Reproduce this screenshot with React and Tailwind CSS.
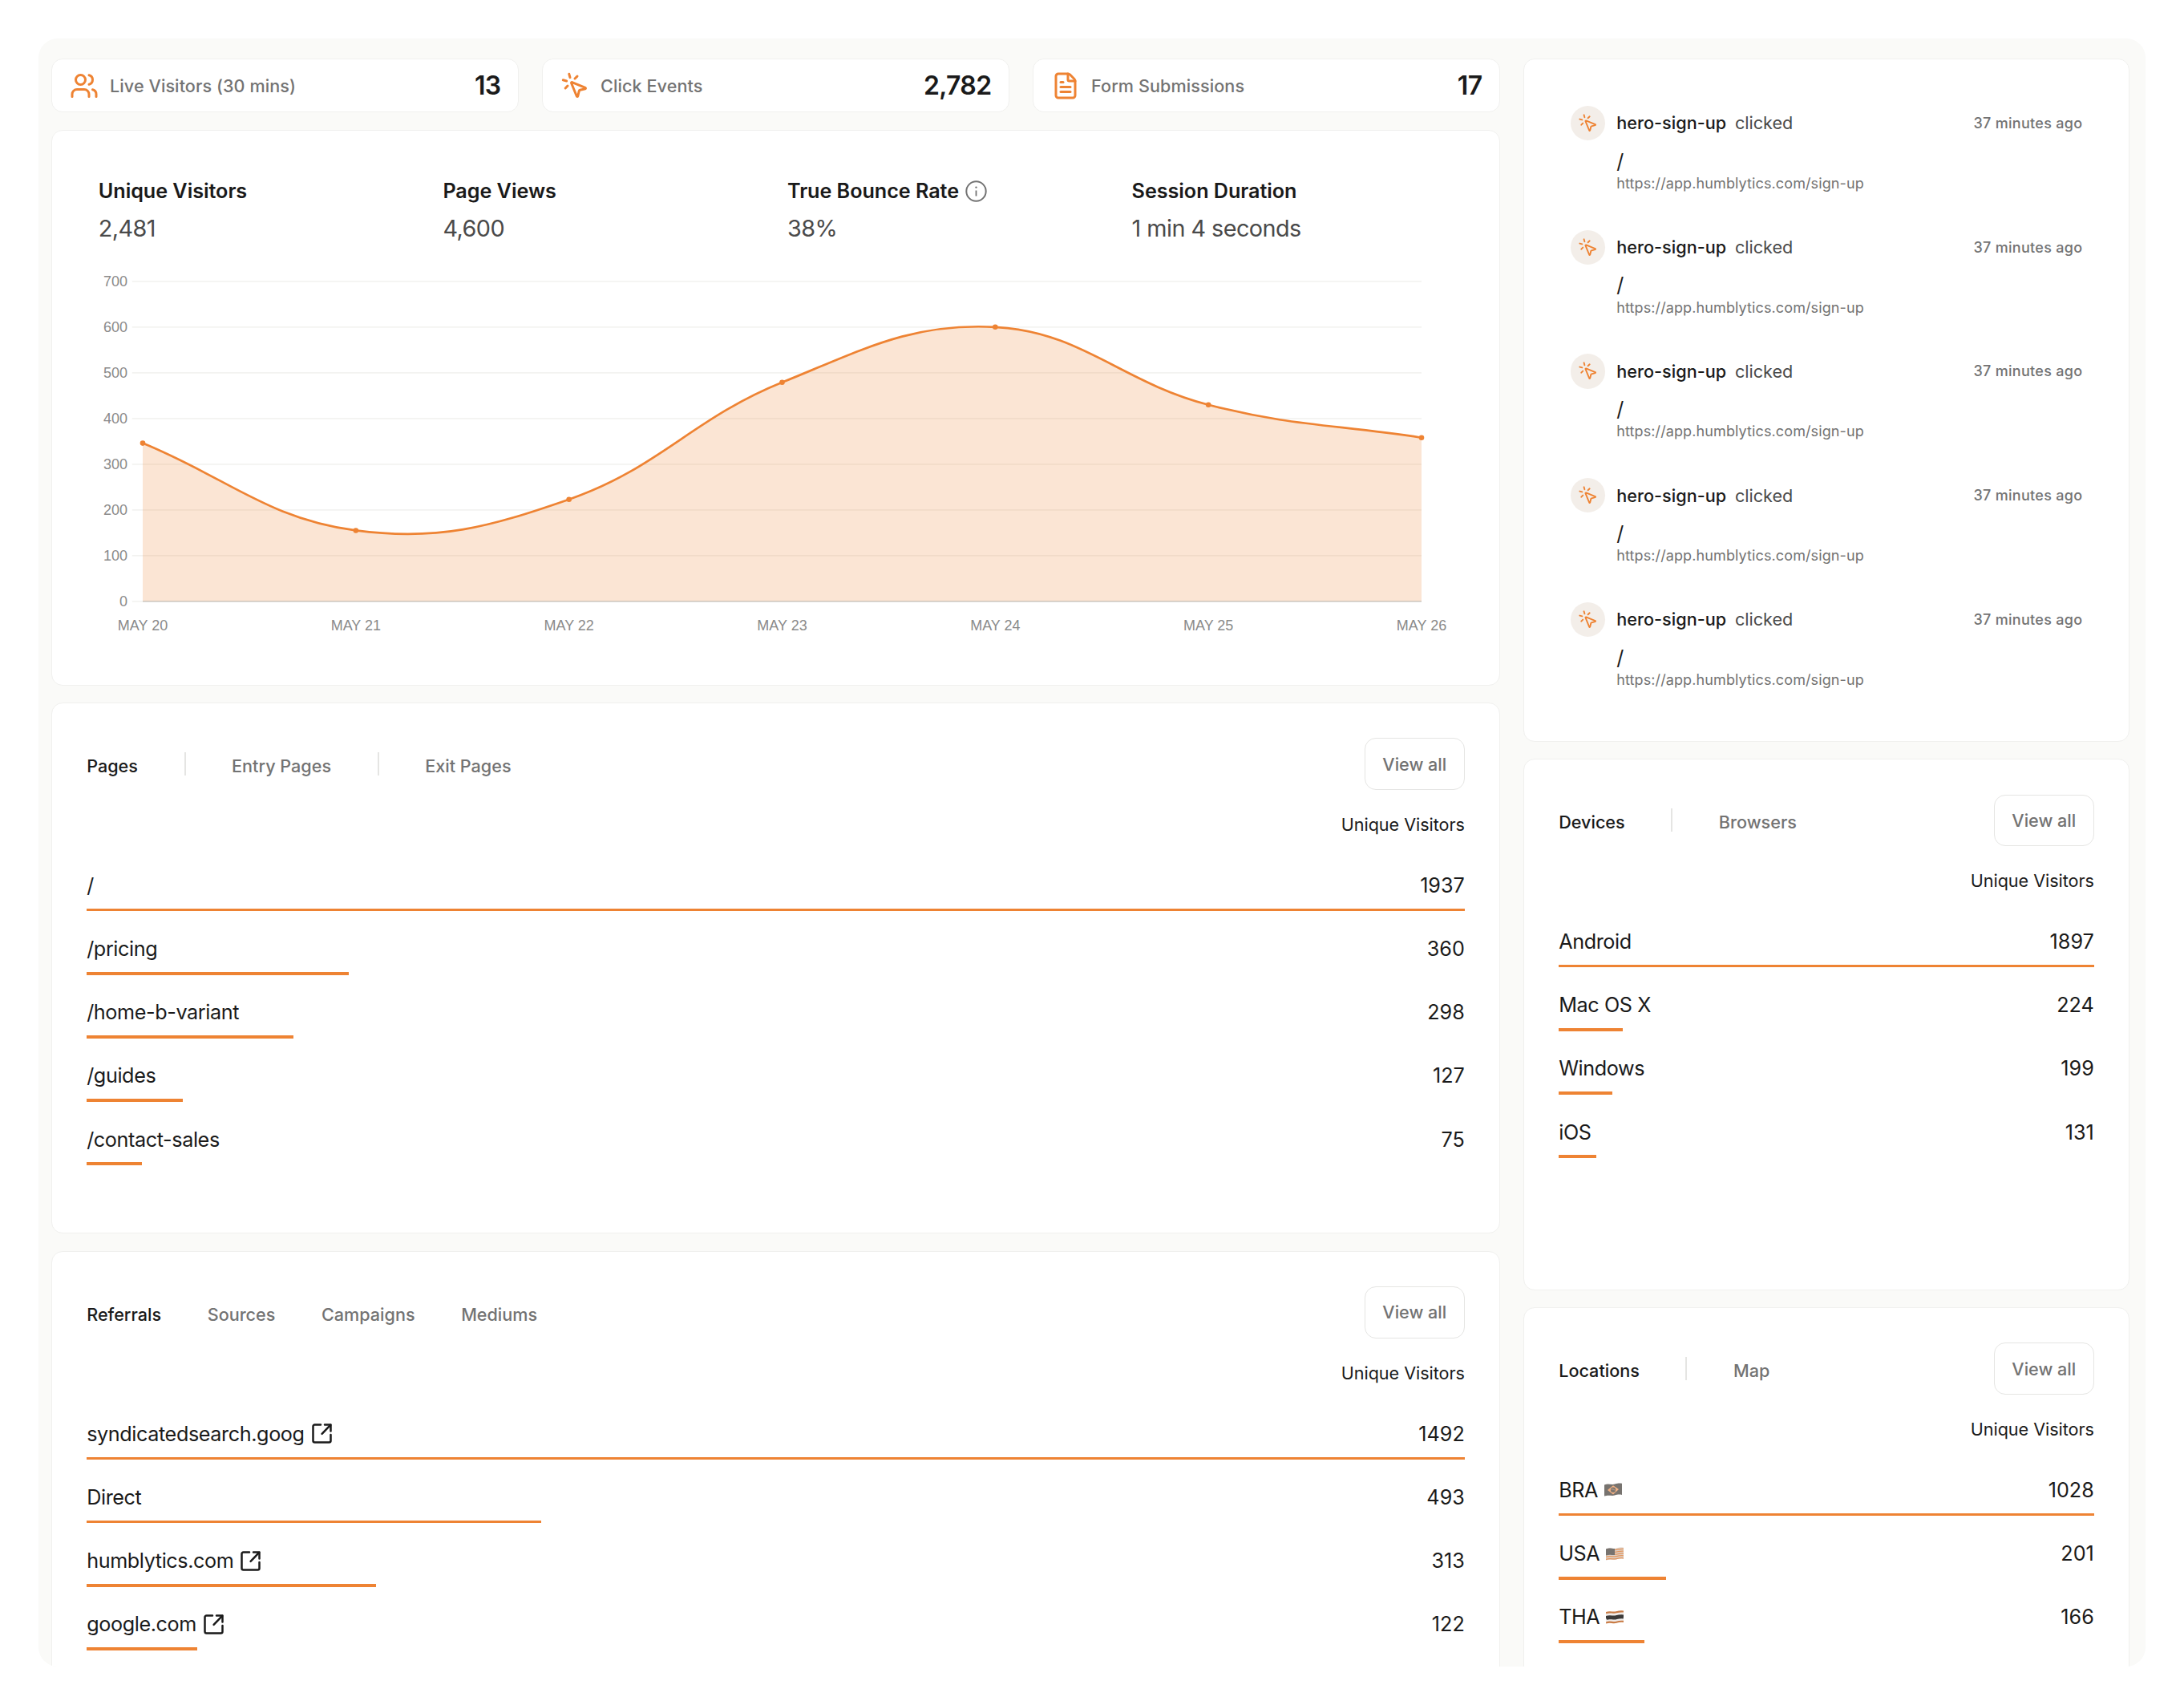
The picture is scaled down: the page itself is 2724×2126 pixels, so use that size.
import React from "react";
import { FileText, MousePointerClick, Users } from "lucide-react";

const ORANGE = "#ee8333";

const stats = [
  { label: "Live Visitors (30 mins)", value: "13", icon: Users },
  { label: "Click Events", value: "2,782", icon: MousePointerClick },
  { label: "Form Submissions", value: "17", icon: FileText },
];

const metrics = [
  { label: "Unique Visitors", value: "2,481" },
  { label: "Page Views", value: "4,600" },
  { label: "True Bounce Rate", value: "38%", info: true },
  { label: "Session Duration", value: "1 min 4 seconds" },
];

const visitors = [
  { date: "MAY 20", count: 346 },
  { date: "MAY 21", count: 155 },
  { date: "MAY 22", count: 223 },
  { date: "MAY 23", count: 479 },
  { date: "MAY 24", count: 600 },
  { date: "MAY 25", count: 430 },
  { date: "MAY 26", count: 358 },
];

const pages = [
  { name: "/", count: 1937 },
  { name: "/pricing", count: 360 },
  { name: "/home-b-variant", count: 298 },
  { name: "/guides", count: 127 },
  { name: "/contact-sales", count: 75 },
];

const referrals = [
  { name: "syndicatedsearch.goog", count: 1492, external: true },
  { name: "Direct", count: 493 },
  { name: "humblytics.com", count: 313, external: true },
  { name: "google.com", count: 122, external: true },
];

const devices = [
  { name: "Android", count: 1897 },
  { name: "Mac OS X", count: 224 },
  { name: "Windows", count: 199 },
  { name: "iOS", count: 131 },
];

const locations = [
  { name: "BRA", count: 1028, flag: "bra" },
  { name: "USA", count: 201, flag: "usa" },
  { name: "THA", count: 166, flag: "tha" },
];

const events = [1, 2, 3, 4, 5];

function InfoIcon() {
  return (
    <svg className="ml-2 size-[27px]" viewBox="0 0 27 27" fill="none" stroke="#737373" strokeWidth="2">
      <circle cx="13.5" cy="13.5" r="12.2" />
      <path d="M13.5 12.5v7" strokeWidth="1.8" />
      <circle cx="13.5" cy="8.6" r="1.2" fill="#737373" stroke="none" />
    </svg>
  );
}

function ExternalIcon() {
  return (
    <svg
      className="ml-[9px] size-[25px]"
      viewBox="0 0 25 25"
      fill="none"
      stroke="#1a1a1a"
      strokeWidth="2.5"
      strokeLinecap="round"
      strokeLinejoin="round"
    >
      <path d="M11 1.5H3.5a2 2 0 0 0-2 2v18a2 2 0 0 0 2 2h18a2 2 0 0 0 2-2V14" />
      <path d="M16 1.5h7.5V9.5" />
      <path d="M23.2 1.8 12.6 12.8" />
    </svg>
  );
}

function Flag({ code }) {
  return (
    <svg className="ml-2 h-[17px] w-[22px]" viewBox="0 0 22 17">
      {code === "bra" && (
        <>
          <path d="M0 2.5C5 .2 9 3 13 1.6 17 .4 19 .4 22 .8V15c-4-.8-6-.2-9 .6-4 1-8-1-13 1z" fill="#77736f" />
          <path d="M11 3.2 18 8l-7 6.4L4 9z" fill="#f3b183" />
          <circle cx="11" cy="8.8" r="3.2" fill="#7d756e" />
          <path d="M8.4 8c2-.5 4 .2 5 1.6" stroke="#d9b79c" strokeWidth=".7" fill="none" />
        </>
      )}
      {code === "usa" && (
        <>
          <path d="M0 2.5C5 .2 9 3 13 1.6 17 .4 19 .4 22 .8V15c-4-.8-6-.2-9 .6-4 1-8-1-13 1z" fill="#ddd0c6" />
          <path
            d="M11 3.6c4-.2 7-1.8 11-1.2M11 6.4c4-.2 7-1.8 11-1.2M11 9.2c4-.2 7-1.8 11-1.2M0 12.4c6-2 9 .4 13-.8 4-1 6-1.2 9-.8M0 15.4c6-2 9 .4 13-.8 4-1 6-1.2 9-.8"
            stroke="#e5965c"
            strokeWidth="1.3"
            fill="none"
          />
          <path d="M0 2.5c4-1.8 7-.4 11-.4v8C7 10 4 9.2 0 10.6z" fill="#77736f" />
        </>
      )}
      {code === "tha" && (
        <>
          <path d="M0 2.5C5 .2 9 3 13 1.6 17 .4 19 .4 22 .8V15c-4-.8-6-.2-9 .6-4 1-8-1-13 1z" fill="#f0ece9" />
          <path d="M0 3.2c5-2.3 9 .5 13-.9 4-1.2 6-1.2 9-.8" stroke="#c97c46" strokeWidth="2.2" fill="none" />
          <path d="M0 9.6c5-2.3 9 .5 13-.9 4-1.2 6-1.2 9-.8" stroke="#3b3a39" strokeWidth="5" fill="none" />
          <path d="M0 15.6c5-2.3 9 .5 13-.9 4-1.2 6-1.2 9-.8" stroke="#c97c46" strokeWidth="2.2" fill="none" />
        </>
      )}
    </svg>
  );
}

function StatCard({ label, value, icon: Icon }) {
  return (
    <div className="flex flex-1 items-center rounded-[14px] border border-[#f0f0ee] bg-white pr-[21.6px] pl-[22px]">
      <Icon className="size-9 text-[#ee8333]" strokeWidth={2} />
      <span className="ml-3.5 text-[21.6px] font-medium tracking-[0.08px] text-[#737373]">{label}</span>
      <span className="ml-auto text-[32px] font-semibold tracking-[-0.7px] text-[#1a1a1a]">{value}</span>
    </div>
  );
}

const LEFT = 100;
const RIGHT = 1695;
const TOP = 20.8;
const BOTTOM = 419.8;

function VisitorsChart() {
  const step = (RIGHT - LEFT) / (visitors.length - 1);
  const pts = visitors.map((d, i) => ({
    x: LEFT + i * step,
    y: BOTTOM - (d.count / 700) * (BOTTOM - TOP),
  }));

  // Control points on both sides of every value
  const controls = pts.map((p, i) => {
    const prev = pts[i - 1] || p;
    const next = pts[i + 1] || p;
    const d01 = Math.hypot(p.x - prev.x, p.y - prev.y);
    const d12 = Math.hypot(next.x - p.x, next.y - p.y);
    const a = (0.4 * d01) / (d01 + d12);
    const b = (0.4 * d12) / (d01 + d12);
    const dx = next.x - prev.x;
    const dy = next.y - prev.y;
    return { before: [p.x - a * dx, p.y - a * dy], after: [p.x + b * dx, p.y + b * dy] };
  });

  const line = pts
    .map((p, i) =>
      i === 0 ? `M${p.x} ${p.y}` : `C${controls[i - 1].after} ${controls[i].before} ${p.x} ${p.y}`
    )
    .join(" ");

  return (
    <svg className="block h-[480px] w-[1763px]" viewBox="0 0 1763 480">
      {[0, 100, 200, 300, 400, 500, 600, 700].map((v) => {
        const y = BOTTOM - (v / 700) * (BOTTOM - TOP);
        return (
          <g key={v}>
            <line x1="86.8" x2={RIGHT} y1={y} y2={y} stroke="#f3f3f1" strokeWidth="1.8" />
            <text x="81" y={y + 6.5} textAnchor="end" fontSize="18" fill="#8a8a8a" fontFamily="Liberation Sans, sans-serif">
              {v}
            </text>
          </g>
        );
      })}
      <path d={`${line} L${RIGHT} ${BOTTOM} L${LEFT} ${BOTTOM} Z`} fill={ORANGE} fillOpacity="0.21" />
      <line x1={LEFT} x2={RIGHT} y1={BOTTOM} y2={BOTTOM} stroke="#000" strokeOpacity="0.13" strokeWidth="1.8" />
      <path d={line} fill="none" stroke={ORANGE} strokeWidth="2.7" />
      {pts.map((p, i) => (
        <g key={visitors[i].date}>
          <circle cx={p.x} cy={p.y} r="3.3" fill={ORANGE} />
          <text x={p.x} y="456.3" textAnchor="middle" fontSize="18" fill="#8a8a8a" fontFamily="Liberation Sans, sans-serif">
            {visitors[i].date}
          </text>
        </g>
      ))}
    </svg>
  );
}

function ListCard({ tabs, divided, rows }) {
  const max = rows[0].count;

  return (
    <div className="h-[662.3px] shrink-0 rounded-[14px] border border-[#f0f0ee] bg-white p-[43.2px]">
      <div className="flex h-[64.8px] items-center">
        <div className="flex items-center gap-[57.6px]">
          {tabs.map((tab, i) => (
            <React.Fragment key={tab}>
              {divided && i > 0 && <div className="h-[29px] w-0.5 bg-[#e5e5e3]" />}
              <span
                className={`pt-[5px] text-[21.6px] font-medium ${i === 0 ? "text-[#1a1a1a]" : "text-[#737373]"}`}
              >
                {tab}
              </span>
            </React.Fragment>
          ))}
        </div>
        <button className="ml-auto h-full w-[125px] rounded-[14px] border border-[#e5e5e3] text-[21.6px] font-medium text-[#737373]">
          View all
        </button>
      </div>
      <p className="mt-[28.8px] text-right text-[21.6px] leading-[28.8px] tracking-[-0.05px] text-[#1a1a1a]">
        Unique Visitors
      </p>
      <div className="mt-[43.2px] flex flex-col gap-[28.8px]">
        {rows.map((row) => (
          <div key={row.name}>
            <div className="flex h-9 items-center text-[25.2px] leading-9 text-[#1a1a1a]">
              <span className="tracking-[-0.4px]">{row.name}</span>
              {row.external && <ExternalIcon />}
              {row.flag && <Flag code={row.flag} />}
              <span className="ml-auto">{row.count}</span>
            </div>
            <div
              className="mt-[10.8px] h-[3.6px] bg-[#ee8333]"
              style={{ width: `${Math.round((row.count / max) * 100)}%` }}
            />
          </div>
        ))}
      </div>
    </div>
  );
}

function EventItem() {
  return (
    <div className="h-[154.8px]">
      <div className="flex h-[43.2px] items-center">
        <div className="flex size-[43.2px] items-center justify-center rounded-full bg-[#f3eee9]">
          <MousePointerClick className="size-[25.2px] text-[#ee8333]" strokeWidth={1.8} />
        </div>
        <span className="ml-[14.4px] text-[21.6px] font-medium tracking-[0.05px] text-[#1a1a1a]">hero-sign-up</span>
        <span className="ml-[10.8px] text-[21.6px] text-[#4a4a4a]">clicked</span>
        <span className="ml-auto text-[18px] font-medium tracking-[0.3px] text-[#737373]">37 minutes ago</span>
      </div>
      <div className="mt-[11.6px] pl-[57.6px]">
        <p className="text-[25.2px] leading-[28.8px] text-[#1a1a1a]">/</p>
        <p className="mt-[0.4px] text-[18px] leading-[25.2px] tracking-[0.11px] text-[#737373]">
          https://app.humblytics.com/sign-up
        </p>
      </div>
    </div>
  );
}

export default function App() {
  return (
    <div className="h-[2126px] w-[2724px] bg-white p-12 font-['Inter',sans-serif]">
      <div className="flex h-[2030px] gap-[29px] overflow-hidden rounded-[24px] bg-[#fafaf8] pt-[25.2px] pr-5 pl-4">
        <div className="flex w-[1807px] flex-col gap-[21.6px]">
          <div className="flex h-[67.2px] shrink-0 gap-[29px]">
            {stats.map((s) => (
              <StatCard key={s.label} {...s} />
            ))}
          </div>

          {/* Metrics and chart */}
          <div className="h-[692.6px] shrink-0 rounded-[14px] border border-[#f0f0ee] bg-white pt-[58px] pl-[12.8px]">
            <div className="flex pl-[45px]">
              {metrics.map((m) => (
                <div key={m.label} className="w-[429.6px]">
                  <div className="flex h-9 items-center text-[25.2px] font-semibold tracking-[-0.05px] text-[#1a1a1a]">
                    {m.label}
                    {m.info && <InfoIcon />}
                  </div>
                  <div className="mt-2.5 text-[28.8px] leading-9 tracking-[-0.55px] text-[#4a4a4a]">{m.value}</div>
                </div>
              ))}
            </div>
            <div className="mt-[27px]">
              <VisitorsChart />
            </div>
          </div>

          <ListCard tabs={["Pages", "Entry Pages", "Exit Pages"]} divided rows={pages} />
          <ListCard tabs={["Referrals", "Sources", "Campaigns", "Mediums"]} rows={referrals} />
        </div>

        <div className="flex w-[756px] flex-col gap-[21.6px]">
          <div className="h-[851.55px] shrink-0 rounded-[14px] border border-[#f0f0ee] bg-white px-[57.6px] pt-[57.6px]">
            {events.map((id) => (
              <EventItem key={id} />
            ))}
          </div>
          <ListCard tabs={["Devices", "Browsers"]} divided rows={devices} />
          <ListCard tabs={["Locations", "Map"]} divided rows={locations} />
        </div>
      </div>
    </div>
  );
}
